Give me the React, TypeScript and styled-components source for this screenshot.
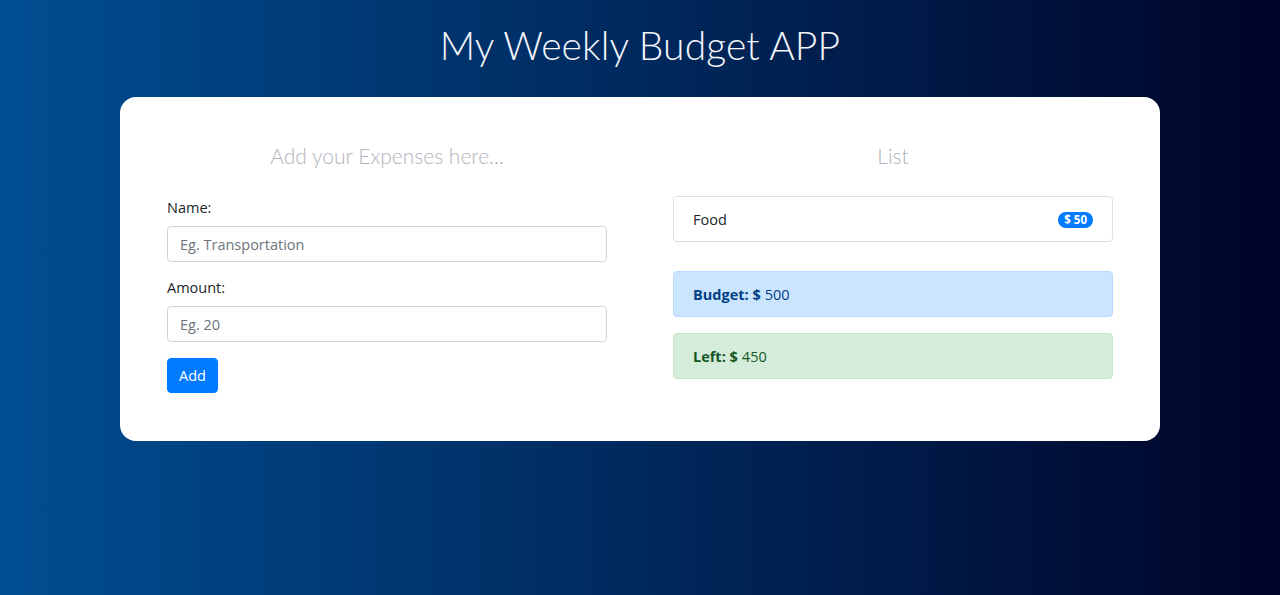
import React from 'react';
import styled, { createGlobalStyle } from 'styled-components';

const GlobalStyle = createGlobalStyle`
  html, body {
    margin: 0;
    padding: 0;
  }
  body {
    font-family: 'Open Sans', 'Noto Sans', sans-serif;
    color: #212529;
  }
  * {
    box-sizing: border-box;
  }
`;

interface Expense {
  name: string;
  amount: number;
}

const expenses: Expense[] = [{ name: 'Food', amount: 50 }];
const budget = 500;

const App: React.FC = () => {
  const spent = expenses.reduce((sum, e) => sum + e.amount, 0);

  return (
    <Page>
      <GlobalStyle />
      <Title>My Weekly Budget APP</Title>

      <Card>
        <Column>
          <SectionTitle>Add your Expenses here...</SectionTitle>
          <FormGroup>
            <Label htmlFor="name">Name:</Label>
            <Input id="name" type="text" placeholder="Eg. Transportation" />
          </FormGroup>
          <FormGroup>
            <Label htmlFor="amount">Amount:</Label>
            <Input id="amount" type="number" placeholder="Eg. 20" />
          </FormGroup>
          <AddButton type="button">Add</AddButton>
        </Column>

        <Column>
          <SectionTitle>List</SectionTitle>
          <ExpenseList>
            {expenses.map((e) => (
              <ExpenseItem key={e.name}>
                <span>{e.name}</span>
                <Badge>$ {e.amount}</Badge>
              </ExpenseItem>
            ))}
          </ExpenseList>
          <Alert $variant="primary">
            <strong>Budget: $</strong> {budget}
          </Alert>
          <Alert $variant="success">
            <strong>Left: $</strong> {budget - spent}
          </Alert>
        </Column>
      </Card>
    </Page>
  );
};

const Page = styled.div`
  min-height: 100vh;
  padding-top: 19px;
  background: linear-gradient(to right, #004e92, #000428);
`;

const Title = styled.h1`
  margin: 0 0 26px;
  text-align: center;
  color: #f4f6fb;
  font-family: 'Lato', sans-serif;
  font-weight: 300;
  font-size: 39px;
  line-height: 52px;
  letter-spacing: 0.1px;
`;

const Card = styled.div`
  width: 1040px;
  margin: 0 auto;
  background: #ffffff;
  border-radius: 16px;
  padding: 44px 47px 48px;
  display: grid;
  grid-template-columns: 440px 440px;
  column-gap: 66px;
`;

const Column = styled.div`
  display: flex;
  flex-direction: column;
  align-items: stretch;
`;

const SectionTitle = styled.h3`
  margin: 0 0 25px;
  text-align: center;
  font-family: 'Lato', sans-serif;
  font-weight: 300;
  font-size: 21px;
  line-height: 30px;
  color: #b2b2bc;
`;

const FormGroup = styled.div`
  display: flex;
  flex-direction: column;
  margin-bottom: 14px;
`;

const Label = styled.label`
  font-size: 14.5px;
  line-height: 24px;
  margin-bottom: 6px;
  color: #212529;
`;

const Input = styled.input`
  height: 36px;
  padding: 6px 12px;
  font-family: 'Open Sans', 'Noto Sans', sans-serif;
  font-size: 14.5px;
  color: #495057;
  border: 1px solid #ced4da;
  border-radius: 4px;
  outline: none;

  &::placeholder {
    color: #6c757d;
  }

  &::-webkit-outer-spin-button,
  &::-webkit-inner-spin-button {
    -webkit-appearance: none;
    margin: 0;
  }
`;

const AddButton = styled.button`
  align-self: flex-start;
  margin-top: 2px;
  height: 35px;
  padding: 0 11px;
  font-family: 'Open Sans', 'Noto Sans', sans-serif;
  font-size: 14.5px;
  color: #ffffff;
  background: #007bff;
  border: 1px solid #007bff;
  border-radius: 4px;
  cursor: pointer;
`;

const ExpenseList = styled.ul`
  list-style: none;
  margin: 0 0 29px;
  padding: 0;
`;

const ExpenseItem = styled.li`
  display: flex;
  align-items: center;
  justify-content: space-between;
  height: 46px;
  padding: 1px 19px 0;
  font-size: 14.5px;
  line-height: 24px;
  border: 1px solid rgba(0, 0, 0, 0.125);
  border-radius: 4px;
`;

const Badge = styled.span`
  display: inline-block;
  padding: 0 6px;
  font-size: 11.5px;
  font-weight: 700;
  line-height: 16px;
  color: #ffffff;
  background: #007bff;
  border-radius: 10px;
`;

const alertColors = {
  primary: { bg: '#cce5ff', border: '#b8daff', text: '#004085' },
  success: { bg: '#d4edda', border: '#c3e6cb', text: '#155724' },
};

const Alert = styled.div<{ $variant: 'primary' | 'success' }>`
  display: flex;
  align-items: center;
  gap: 4px;
  height: 46px;
  margin-bottom: 16px;
  padding: 1px 19px 0;
  font-size: 14.5px;
  line-height: 24px;
  border-radius: 4px;
  background: ${({ $variant }) => alertColors[$variant].bg};
  border: 1px solid ${({ $variant }) => alertColors[$variant].border};
  color: ${({ $variant }) => alertColors[$variant].text};

  &:last-child {
    margin-bottom: 0;
  }

  strong {
    font-weight: 700;
  }
`;

export default App;
